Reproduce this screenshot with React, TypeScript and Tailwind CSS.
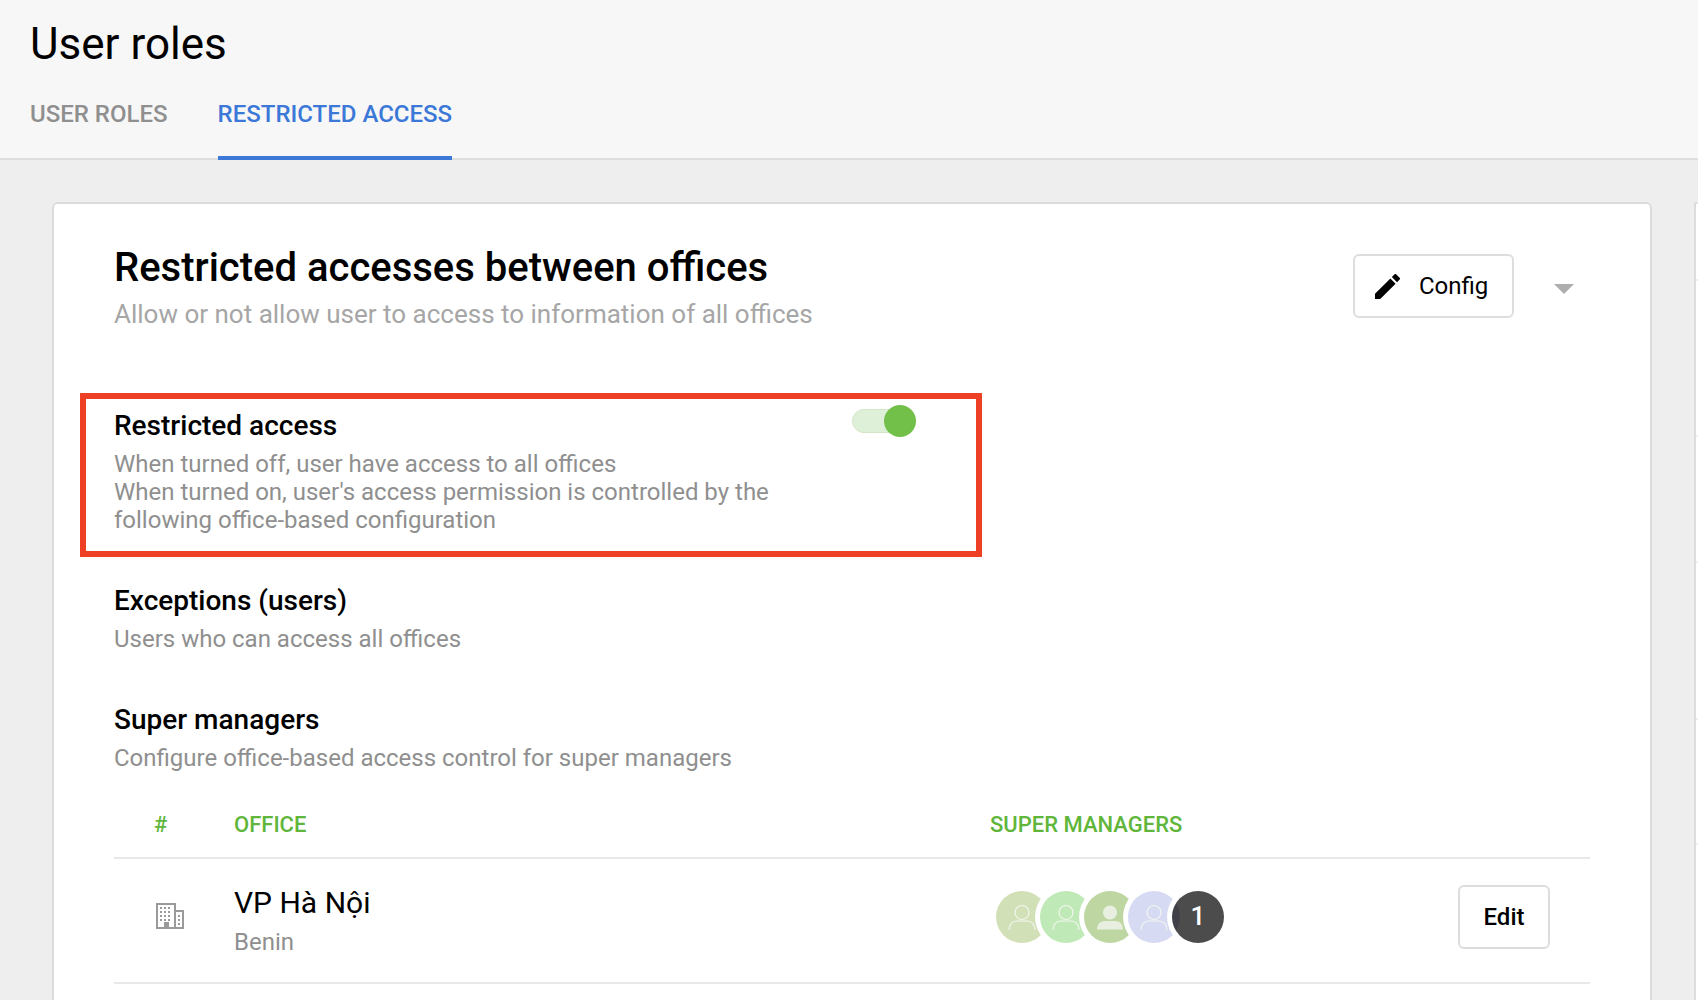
const Avatar = ({ bg, solid }: { bg: string; solid?: boolean }) => (
  <div className={`relative z-0 -ml-2 first:ml-0 flex h-[52px] w-[52px] shrink-0 items-center justify-center rounded-full shadow-[0_0_0_5px_#fff] ${bg}`}>
    {solid ? (
      <svg width="30" height="30" viewBox="0 0 30 30" fill="#e8efe0">
        <circle cx="15" cy="10.500" r="7" />
        <path d="M2 27.500c0-5 3-8.500 8-8.500h10c5 0 8 3.500 8 8.500z" />
      </svg>
    ) : (
      <svg width="30" height="30" viewBox="0 0 30 30" fill="none" stroke="#f3f6ef" strokeWidth="1.200">
        <circle cx="15" cy="10.500" r="7" />
        <path d="M2 28c0-5 3-9 8-9h10c5 0 8 4 8 9" />
      </svg>
    )}
  </div>
);

const Section = ({ title, desc }: { title: string; desc: string }) => (
  <div>
    <h3 className="text-[28px] leading-[34px] font-medium text-black">{title}</h3>
    <p className="mt-[7px] text-[24px] leading-[28px] text-[#8f8f8f]">{desc}</p>
  </div>
);

export default function App() {
  return (
    <div className="flex h-screen flex-col overflow-hidden bg-[#eeeeee] font-['Roboto',sans-serif]">
      <header className="h-[160px] shrink-0 border-b-2 border-[#dedede] bg-[#f7f7f7] px-[30px]">
        <h1 className="pt-[18px] text-[44px] leading-[52px] font-normal text-black">User roles</h1>
        <div className="mt-[17px] flex gap-[50px] text-[24px] font-medium">
          <div className="h-[73px] pt-[13px] leading-[28px] text-[#8f8f8f]">USER ROLES</div>
          <div className="h-[73px] border-b-4 border-[#3b78d8] pt-[13px] leading-[28px] text-[#3b78d8]">RESTRICTED ACCESS</div>
        </div>
      </header>

      <main className="flex min-h-0 flex-1 gap-[42px] pt-[42px] pl-[52px]">
        <section className="w-[1600px] shrink-0 rounded-t-md border-2 border-b-0 border-[#dcdcdc] bg-white pt-[40px] pr-[60px] pl-[60px]">
          <div className="flex items-start justify-between">
            <div>
              <h2 className="text-[40px] leading-[48px] font-medium text-black">Restricted accesses between offices</h2>
              <p className="mt-[7px] text-[26px] leading-[30px] text-[#a6a6a6]">Allow or not allow user to access to information of all offices</p>
            </div>
            <div className="mt-[10px] mr-[16px] flex items-center gap-[40px]">
              <button className="flex h-[64px] w-[161px] items-center gap-[19px] rounded-md border-2 border-[#dddddd] pl-[20px] text-[24px] text-black">
                <svg width="25" height="25" viewBox="3 3 18 18" fill="currentColor">
                  <path d="M3 17.250V21h3.750L17.810 9.940l-3.750-3.750L3 17.250zM20.710 7.040a1 1 0 0 0 0-1.410l-2.340-2.340a1 1 0 0 0-1.410 0l-1.830 1.830 3.750 3.750 1.830-1.830z" />
                </svg>
                Config
              </button>
              <div className="mt-[6px] h-0 w-0 border-x-[10px] border-t-[10px] border-x-transparent border-t-[#aeaeae]" />
            </div>
          </div>

          <div className="mt-[64px] -ml-[34px] flex h-[164px] w-[902px] items-start justify-between border-[6px] border-[#ed4024] pt-[10px] pr-[60px] pl-[28px]">
            <div className="w-[670px]">
              <h3 className="text-[28px] leading-[34px] font-medium text-black">Restricted access</h3>
              <p className="mt-[7px] text-[24px] leading-[28px] text-[#8f8f8f]">
                When turned off, user have access to all offices
                <br />
                When turned on, user's access permission is controlled by the following office-based configuration
              </p>
            </div>
            <div className="relative -mt-[4px] h-[32px] w-[64px]">
              <div className="absolute top-[4px] left-0 h-[24px] w-[55px] rounded-full border border-[#d3e6c8] bg-[#dff0d8]" />
              <div className="absolute top-0 right-0 h-[32px] w-[32px] rounded-full bg-[#72bf4a]" />
            </div>
          </div>

          <div className="mt-[27px]">
            <Section title="Exceptions (users)" desc="Users who can access all offices" />
          </div>
          <div className="mt-[50px]">
            <Section title="Super managers" desc="Configure office-based access control for super managers" />
          </div>

          <div className="mt-[36px] grid h-[51px] grid-cols-[120px_756px_1fr] items-center border-b-2 border-[#e8e8e8] pb-[16px] text-[22px] font-medium text-[#5fb63b]">
            <div className="pl-[40px]">#</div>
            <div>OFFICE</div>
            <div>SUPER MANAGERS</div>
          </div>
          <div className="grid h-[125px] grid-cols-[120px_756px_1fr] items-center border-b-2 border-[#e8e8e8]">
            <svg className="mb-[10px] ml-[41px]" width="30" height="28" viewBox="0 0 30 28" fill="#9a9a9a">
              <path fillRule="evenodd" d="M1 1h20v7h8v19H1zM3 3v22h6v-5h5v5h5V3zM21 10v15h6V10z" />
              <path d="M5 5h2v2H5zM9 5h2v2H9zM13 5h2v2h-2zM5 9h2v2H5zM9 9h2v2H9zM13 9h2v2h-2zM5 13h2v2H5zM9 13h2v2H9zM13 13h2v2h-2zM5 17h2v2H5zM9 17h2v2H9zM13 17h2v2h-2zM23 13h2v2h-2zM23 17h2v2h-2zM23 21h2v2h-2z" />
            </svg>
            <div className="mb-[2px]">
              <div className="text-[30px] leading-[38px] text-black">VP Hà Nội</div>
              <div className="mt-[6px] text-[24px] leading-[28px] text-[#8f8f8f]">Benin</div>
            </div>
            <div className="mb-[8px] flex items-center justify-between pr-[40px] pl-[6px]">
              <div className="flex">
                <Avatar bg="bg-[#d2e0b8]" />
                <Avatar bg="bg-[#bfe9b6]" />
                <Avatar bg="bg-[#bed6a1]" solid />
                <Avatar bg="bg-[#d6daf2]" />
                <div className="relative z-10 -ml-2 flex h-[52px] w-[52px] items-center justify-center rounded-full bg-black/70 text-[26px] font-medium text-white shadow-[0_0_0_5px_#fff]">1</div>
              </div>
              <button className="h-[64px] w-[92px] rounded-md border-2 border-[#dddddd] text-[24px] font-medium text-black">Edit</button>
            </div>
          </div>
        </section>

        <section className="flex-1 rounded-t-md border-2 border-r-0 border-b-0 border-[#dcdcdc] bg-white pt-[75px]">
          <div className="h-[156px] border-t-2 border-[#eeeeee]" />
          <div className="h-[126px] border-t-2 border-[#eeeeee]" />
          <div className="h-[157px] border-t-2 border-[#eeeeee]" />
          <div className="h-[125px] border-t-2 border-[#eeeeee]" />
          <div className="border-t-2 border-[#eeeeee]" />
        </section>
      </main>
    </div>
  );
}
